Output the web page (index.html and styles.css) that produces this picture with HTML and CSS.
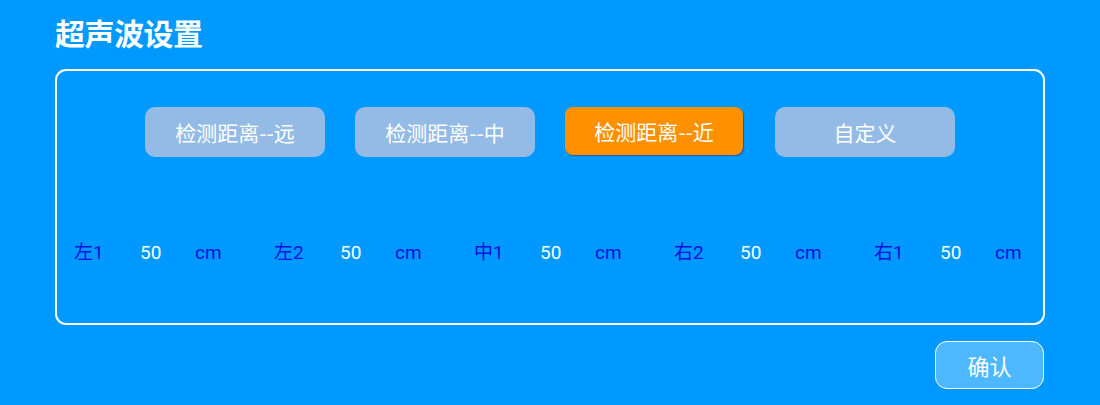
FILE: index.html
```html
<!DOCTYPE html>
<html lang="zh">
<head>
<meta charset="utf-8">
<link rel="stylesheet" href="styles.css">
</head>
<body>
<div class="page">
  <h1 class="title">超声波设置</h1>
  <div class="panel">
    <div class="modes">
      <div class="mode">检测距离--远</div>
      <div class="mode">检测距离--中</div>
      <div class="mode active">检测距离--近</div>
      <div class="mode">自定义</div>
    </div>
    <div class="sensors">
      <div class="sensor"><span class="lbl">左1</span><span class="val">50</span><span class="unit">cm</span></div>
      <div class="sensor"><span class="lbl">左2</span><span class="val">50</span><span class="unit">cm</span></div>
      <div class="sensor"><span class="lbl">中1</span><span class="val">50</span><span class="unit">cm</span></div>
      <div class="sensor"><span class="lbl">右2</span><span class="val">50</span><span class="unit">cm</span></div>
      <div class="sensor"><span class="lbl">右1</span><span class="val">50</span><span class="unit">cm</span></div>
    </div>
  </div>
  <div class="footer">
    <button class="confirm">确认</button>
  </div>
</div>
</body>
</html>
```

FILE: styles.css
```css
html, body {
  margin: 0;
  padding: 0;
  background: #0099ff;
  width: 1100px;
  height: 405px;
  overflow: hidden;
  font-family: "Roboto", "Noto Sans CJK SC", sans-serif;
}

.page {
  padding: 17px 55px 0 55px;
  box-sizing: border-box;
  width: 1100px;
}

.title {
  margin: 0;
  height: 30px;
  font-size: 30px;
  letter-spacing: -0.5px;
  line-height: 30px;
  font-weight: bold;
  color: #ffffff;
  font-family: "Noto Sans CJK SC", sans-serif;
  padding-left: 0;
}

.panel {
  margin-top: 22px;
  height: 256px;
  border: 2px solid #ffffff;
  border-radius: 11px;
  box-sizing: border-box;
  display: flex;
  flex-direction: column;
}

.modes {
  display: flex;
  justify-content: center;
  gap: 30px;
  margin-top: 36px;
}

.mode {
  width: 180px;
  height: 50px;
  border-radius: 10px;
  background: #93bbe5;
  color: #ffffff;
  font-family: "Noto Sans CJK SC", sans-serif;
  font-size: 21px;
  display: flex;
  align-items: center;
  justify-content: center;
  flex-shrink: 0;
}

.mode.active {
  background: #ff9000;
  width: 178px;
  height: 48px;
  margin-right: 2px;
  border-radius: 8px;
  box-shadow: 1px 1px 1px #1f5f9a;
}

.sensors {
  display: flex;
  margin-top: 84px;
  padding-left: 17px;
}

.sensor {
  width: 200px;
  flex-shrink: 0;
  display: flex;
  align-items: center;
  font-size: 19px;
  line-height: 24px;
}

.lbl {
  width: 66px;
  color: #0810e0;
}

.val {
  width: 55px;
  color: #ffffff;
}

.unit {
  color: #0810e0;
}

.footer {
  display: flex;
  justify-content: flex-end;
  margin-top: 16px;
  padding-right: 1px;
}

.confirm {
  width: 109px;
  height: 48px;
  border: 1px solid #ffffff;
  border-radius: 12px;
  background: #4db8ff;
  color: #ffffff;
  font-family: "Noto Sans CJK SC", sans-serif;
  font-size: 22px;
  padding: 0;
  margin: 0;
}
```
